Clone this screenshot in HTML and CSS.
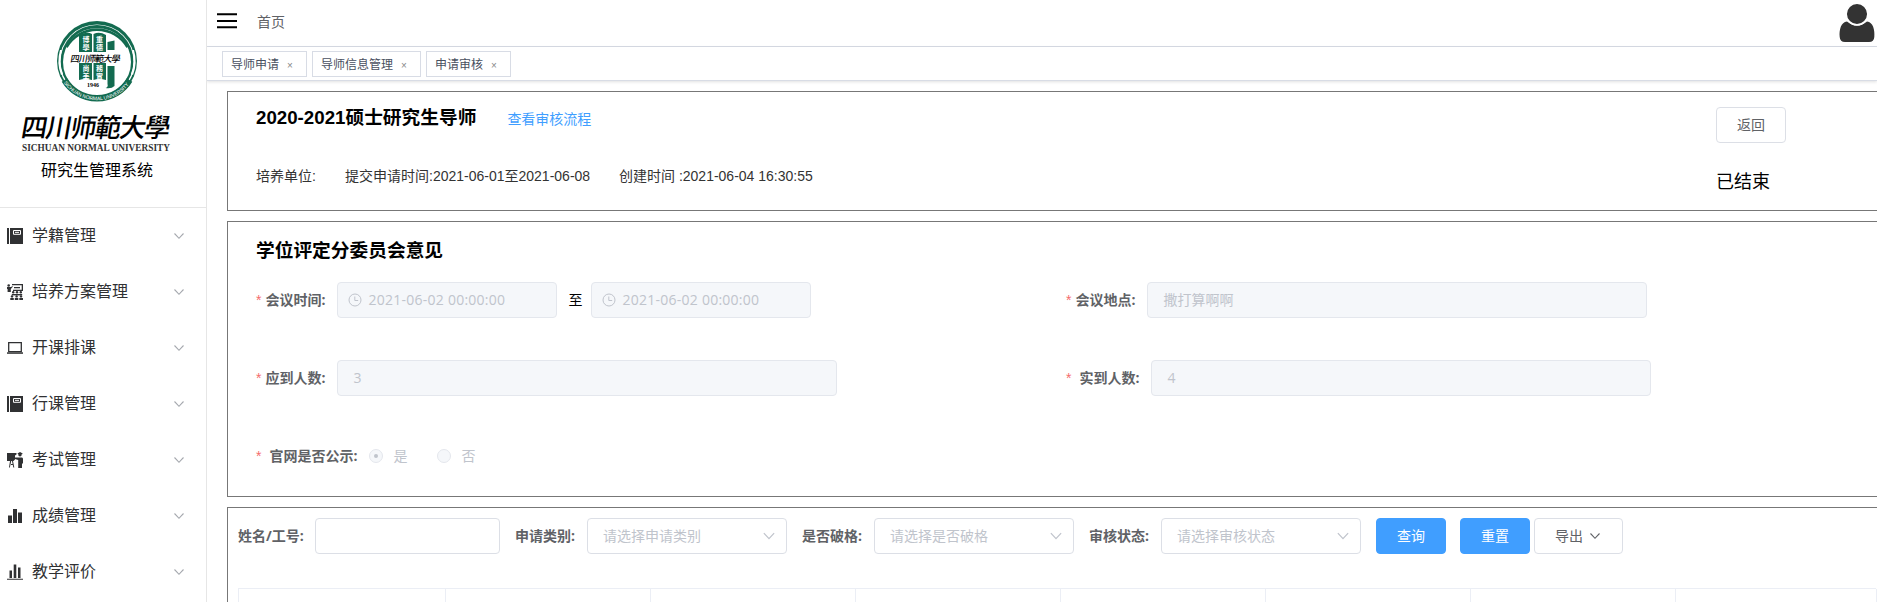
FILE: index.html
```html
<!DOCTYPE html>
<html lang="zh-CN">
<head>
<meta charset="utf-8">
<title>研究生管理系统</title>
<link rel="stylesheet" href="styles.css">
</head>
<body>
<svg class="defs" width="0" height="0">
  <symbol id="down" viewBox="0 0 14 14"><path d="M2.5 4.5 7 9.3l4.5-4.8" fill="none" stroke="currentColor" stroke-width="1.1"/></symbol>
  <symbol id="clock" viewBox="0 0 14 14"><circle cx="7" cy="7" r="6" fill="none" stroke="currentColor"/><path d="M6.8 3.5v4h3.4" fill="none" stroke="currentColor"/></symbol>
  <symbol id="book" viewBox="0 0 16 16"><path d="M0 0h2v16H0zM3 0h13v16H3z" fill="#303133"/><path d="M6.5 2.5h7v3.8h-7z" fill="#303133" stroke="#fff" stroke-width="1"/><path d="M8 4.4h4" stroke="#ddd" stroke-width="1.2"/></symbol>
  <symbol id="class" viewBox="0 0 16 16"><circle cx="1.7" cy="1.5" r="1.3"/><path d="M0 3h4.2l1-1 .6.7L3.8 5v3H.6V5H0zM5 0h11v7H6V5.8h8.7V1.3H5zM7 3h6v1.2H7z"/><circle cx="6.2" cy="8.3" r="1.2"/><circle cx="10" cy="8.3" r="1.2"/><circle cx="13.8" cy="8.3" r="1.2"/><path d="M4.8 10h10.4v1.4H4.8z"/><circle cx="5" cy="12.4" r="1.2"/><circle cx="9.6" cy="12.4" r="1.2"/><circle cx="14" cy="12.4" r="1.2"/><path d="M3.3 14h3.5v2H3.3zM7.8 14h3.5v2H7.8zM12.3 14H16v2h-3.700z"/></symbol>
  <symbol id="laptop" viewBox="0 0 16 16"><path d="M1.700 2.600h12.600v9H1.700z" fill="none" stroke="#303133" stroke-width="1.300"/><path d="M0 12.300h16v1.500H0z"/></symbol>
  <symbol id="teach" viewBox="0 0 16 16"><path d="M0 1h9.500v1.500L8 3.500v4L6.500 9H0zM3 9h1.200l-1.300 6.500H2zM5 9h1l1.300 6.500h-1zM4 12h2v1H4z"/><path d="M10.500 1.500 13 0l2.700 1.500-.5.800h-4.200z"/><circle cx="13" cy="2.800" r="1.700"/><path d="M8 5.500h7q1 0 1 1.500v4.500h-1V16h-3.800V8L8 7z"/></symbol>
  <symbol id="bars" viewBox="0 0 16 16"><path d="M1 7.500h4V15H1zM6 1h4v14H6zM11 4.500h4V15h-4z"/></symbol>
  <symbol id="bars2" viewBox="0 0 16 16"><path d="M2.500 6.500H5V14H2.500zM6.700.5h2.600V14H6.700zM11 3.500h2.500V14H11zM0 14.800h16v1H0z"/></symbol>
</svg>
<div class="app">
  <aside class="sidebar">
    <div class="brand">
      <svg class="logo" width="206" height="160" viewBox="0 0 206 160">
        <circle cx="97" cy="61" r="40" fill="#136b50"/>
        <circle cx="97" cy="62" r="37.600" fill="#fff"/>
        <circle cx="97" cy="61.500" r="36.500" fill="#136b50"/>
        <circle cx="97" cy="62" r="34" fill="#fff"/>
        <path d="M60 50A39 39 0 0 0 61 75L63 74A37 37 0 0 1 62 50zM134 50A39 39 0 0 1 133 75L131 74A37 37 0 0 0 132 50z" fill="#fff"/>
        <path d="M66 46A36 36 0 0 1 128 46L126.500 48A34 34 0 0 0 67.500 48z" fill="#136b50"/>
        <path d="M64.500 80A38 38 0 0 0 129.500 80" fill="none" stroke="#136b50" stroke-width="6.500"/>
        <path id="ring" d="M65.500 81.500A38 38 0 0 0 128.500 81.500" fill="none"/>
        <text class="ring-text"><textPath href="#ring" textLength="72">SICHUAN NORMAL UNIVERSITY</textPath></text>
        <path d="M79 35q8-4 13-1v18H79zM93.500 34q6-3 12.500 1v17H93.500zM107.500 42l7-1.500V50h-7zM79 63h13v17q-7-2-13 0zM93.500 63H106v17q-7-2-12.500 0zM107.500 66h7v20q-3 3-9 2 3-1 2-4z" fill="#136b50"/>
        <g class="motto"><text x="82.500" y="42">博</text><text x="82.500" y="50">學</text><text x="96" y="42">重</text><text x="96" y="50">德</text><text x="82.500" y="71">尚</text><text x="82.500" y="78.500">美</text><text x="96" y="71">務</text><text x="96" y="78.500">實</text></g>
        <text class="brush" transform="translate(70 62) skewX(-10)" font-size="9" textLength="50">四川师範大學</text>
        <text class="year" x="87" y="87" textLength="12">1946</text>
        <text class="brush" transform="translate(20 137) skewX(-10)" font-size="26" textLength="149">四川师範大學</text>
        <text class="latin" x="22" y="151" textLength="148" lengthAdjust="spacingAndGlyphs">SICHUAN NORMAL UNIVERSITY</text>
      </svg>
      <div class="system">研究生管理系统</div>
    </div>
    <nav class="menu">
      <div class="item"><svg><use href="#book"/></svg><span>学籍管理</span><svg class="arrow"><use href="#down"/></svg></div>
      <div class="item"><svg><use href="#class"/></svg><span>培养方案管理</span><svg class="arrow"><use href="#down"/></svg></div>
      <div class="item"><svg><use href="#laptop"/></svg><span>开课排课</span><svg class="arrow"><use href="#down"/></svg></div>
      <div class="item"><svg><use href="#book"/></svg><span>行课管理</span><svg class="arrow"><use href="#down"/></svg></div>
      <div class="item"><svg><use href="#teach"/></svg><span>考试管理</span><svg class="arrow"><use href="#down"/></svg></div>
      <div class="item"><svg><use href="#bars"/></svg><span>成绩管理</span><svg class="arrow"><use href="#down"/></svg></div>
      <div class="item"><svg><use href="#bars2"/></svg><span>教学评价</span><svg class="arrow"><use href="#down"/></svg></div>
    </nav>
  </aside>
  <div class="main">
    <header class="header">
      <svg class="burger" width="20" height="16"><path d="M0 1.200h20M0 8h20M0 14.300h20" stroke="#000" stroke-width="2"/></svg>
      <span class="crumb">首页</span>
      <svg class="avatar" width="36" height="40" viewBox="0 0 36 40"><path d="M8 19.500Q18 28 28 19.500C34 20 36 28 35.300 35Q35 40 30 40H6Q1 40 .7 35C0 28 2 20 8 19.500z" fill="#333"/><circle cx="18" cy="12" r="10.800" fill="#333" stroke="#fff" stroke-width="1.500"/></svg>
    </header>
    <div class="tabs">
      <div class="tab">导师申请<i>×</i></div>
      <div class="tab">导师信息管理<i>×</i></div>
      <div class="tab">申请审核<i>×</i></div>
    </div>
    <main class="content">
      <section class="card summary">
        <div class="info">
          <div class="headline"><h3>2020-2021硕士研究生导师</h3><a class="link">查看审核流程</a></div>
          <div class="meta"><span class="unit">培养单位:</span><span class="period">提交申请时间:2021-06-01至2021-06-08</span><span>创建时间 :2021-06-04 16:30:55</span></div>
        </div>
        <div class="side"><button class="btn">返回</button><div class="status">已结束</div></div>
      </section>
      <section class="card opinion">
        <h3>学位评定分委员会意见</h3>
        <div class="row">
          <div class="half"><label class="req">会议时间:</label><div class="input date off"><svg><use href="#clock"/></svg><span>2021-06-02 00:00:00</span></div><span class="to">至</span><div class="input date off"><svg><use href="#clock"/></svg><span>2021-06-02 00:00:00</span></div></div>
          <div class="half"><label class="req">会议地点:</label><div class="input wide off">撒打算啊啊</div></div>
        </div>
        <div class="row">
          <div class="half"><label class="req">应到人数:</label><div class="input wide off">3</div></div>
          <div class="half"><label class="req spaced">实到人数:</label><div class="input wide off">4</div></div>
        </div>
        <div class="row">
          <div class="half"><label class="req spaced">官网是否公示:</label><span class="radio on"></span><span class="choice">是</span><span class="radio"></span><span class="choice">否</span></div>
        </div>
      </section>
      <section class="card query">
        <div class="filters">
          <label>姓名/工号:</label><div class="input name"></div>
          <label>申请类别:</label><div class="input select">请选择申请类别<svg><use href="#down"/></svg></div>
          <label>是否破格:</label><div class="input select">请选择是否破格<svg><use href="#down"/></svg></div>
          <label>审核状态:</label><div class="input select">请选择审核状态<svg><use href="#down"/></svg></div>
          <button class="btn primary">查询</button><button class="btn primary reset">重置</button><button class="btn export">导出<svg><use href="#down"/></svg></button>
        </div>
        <div class="table"><div></div><div></div><div></div><div></div><div></div><div></div><div></div><div></div></div>
      </section>
    </main>
  </div>
</div>
</body>
</html>
```
FILE: styles.css
```css
* { box-sizing: border-box; }
body { margin: 0; overflow: hidden; background: #fff; color: #000; font: 14px/20px "Liberation Sans", "Noto Sans CJK SC", sans-serif; }
.defs { position: absolute; }
.app { display: flex; height: 602px; overflow: hidden; }
.sidebar { flex: none; width: 207px; border-right: 1px solid #e6e6e6; }
.brand { height: 208px; border-bottom: 1px solid #e6e6e6; }
.logo { display: block; }
.brush { font-family: "Noto Sans CJK SC", sans-serif; font-weight: 500; }
.latin { font: bold 9.5px "Liberation Serif", serif; fill: #333; }
.year { font: bold 6px "Liberation Serif", serif; }
.ring-text { font: 5px "Liberation Sans", sans-serif; fill: #fff; dominant-baseline: central; }
.motto { font: bold 7px "Noto Sans CJK SC", sans-serif; fill: #fff; }
.system { padding-left: 41px; font-size: 16px; line-height: 22px; }
.item { display: flex; align-items: center; height: 56px; padding: 0 20px 0 7px; font-size: 16px; color: #303133; }
.item svg { width: 16px; height: 16px; margin-right: 9px; fill: #303133; }
.item span { flex: 1; }
.item .arrow { width: 14px; height: 14px; margin: 0; color: #a5a8ae; }
.main { flex: 1; min-width: 0; overflow: hidden; }
.header { display: flex; align-items: center; height: 47px; padding: 0 1px 5px 10px; border-bottom: 1px solid #d8dce5; }
.burger { margin-right: 20px; }
.crumb { padding-top: 2px; color: #606266; }
.avatar { margin: 2px 1px 0 auto; }
.tabs { display: flex; gap: 5px; height: 34px; padding: 4px 15px; border-bottom: 1px solid #d8dce5; box-shadow: 0 1px 3px rgba(0,0,0,.12); }
.tab { display: flex; height: 26px; padding: 0 13px 0 8px; border: 1px solid #d8dce5; color: #495060; font-size: 12px; line-height: 26px; }
.tab i { width: 6px; margin-left: 8px; color: #888; font: 10px/27px "Liberation Sans", sans-serif; }
.content { width: 1700px; padding: 10px 0 0 20px; }
.card { margin-bottom: 10px; border: 1px solid #777; }
h3 { margin: 0; font-size: 18.72px; line-height: 26px; }
.summary { display: flex; height: 120px; padding-left: 28px; }
.info { width: 1460px; padding-top: 13px; }
.headline { display: flex; gap: 31px; }
.link { padding-top: 4px; color: #409eff; }
.meta { display: flex; padding-top: 35px; color: #333; line-height: 20px; white-space: nowrap; }
.unit { width: 89px; }
.period { width: 274px; }
.side { padding-top: 15px; }
.btn { width: 70px; height: 36px; padding: 0; border: 1px solid #dcdfe6; border-radius: 4px; background: #fff; color: #606266; font: inherit; }
.status { padding-top: 26px; font-size: 18px; line-height: 26px; }
.opinion { height: 276px; padding: 16px 0 0 28px; }
.row { display: flex; height: 78px; padding-top: 18px; }
.half { display: flex; align-items: center; width: 810px; height: 36px; }
label { color: #606266; font-family: "Open Sans", "Noto Sans CJK SC", sans-serif; font-weight: 700; white-space: nowrap; }
.req { margin-right: 12px; }
.req::before { content: "*"; margin-right: 4px; color: #f56c6c; font: 14px "Liberation Sans", sans-serif; }
.spaced::before { margin-right: 8px; }
.input { display: flex; align-items: center; flex: none; height: 36px; padding: 0 15px; border: 1px solid #dcdfe6; border-radius: 4px; color: #c0c4cc; font-family: "Open Sans", "Noto Sans CJK SC", sans-serif; }
.off { border-color: #e4e7ed; background: #f5f7fa; }
.date { width: 220px; padding: 0 10px; letter-spacing: .25px; }
.date svg { width: 14px; height: 14px; margin-right: 6px; }
.wide { width: 500px; }
.to { margin: 0 9px 0 11px; }
.radio { display: grid; place-items: center; width: 14px; height: 14px; border: 1px solid #e4e7ed; border-radius: 50%; background: #f5f7fa; }
.on::after { content: ""; width: 4px; height: 4px; border-radius: 50%; background: #c0c4cc; }
.choice { width: 54px; padding-left: 10px; color: #c0c4cc; }
.query { height: 200px; padding: 10px 0 0 10px; }
.filters { display: flex; align-items: center; height: 70px; padding-bottom: 34px; }
.filters label { width: 72px; }
.filters label:first-child { width: 77px; }
.name { width: 185px; margin-right: 15px; }
.select { width: 200px; margin-right: 15px; }
.select svg { width: 16px; height: 16px; margin: 0 -6px 0 auto; }
.primary { margin-right: 14px; border-color: #409eff; background: #409eff; color: #fff; }
.reset { margin-right: 4px; }
.export { display: flex; align-items: center; justify-content: center; width: 89px; gap: 5px; }
.export svg { width: 14px; height: 14px; }
.table { display: grid; grid-template-columns: 207px repeat(6, 205px) 201px; height: 80px; border-top: 1px solid #ebeef5; border-left: 1px solid #ebeef5; width: 1638px; }
.table div { border-right: 1px solid #ebeef5; }
```
